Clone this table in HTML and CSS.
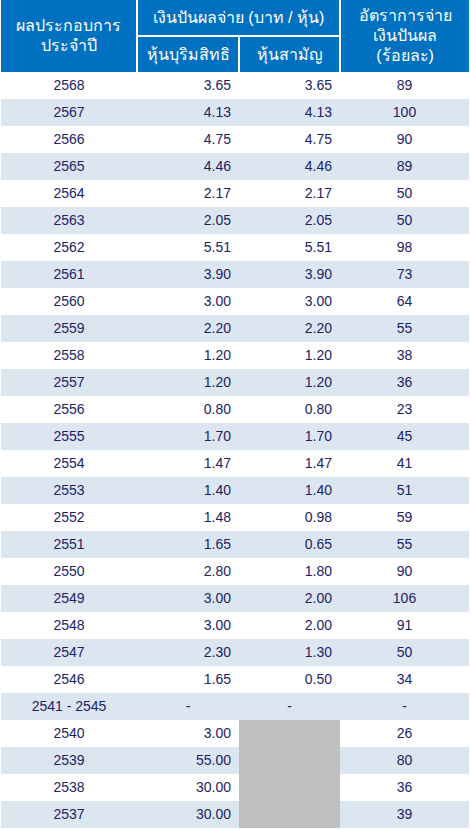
FILE: index.html
```html
<!DOCTYPE html>
<html lang="th">
<head>
<meta charset="utf-8">
<link rel="stylesheet" href="styles.css">
</head>
<body>
<div class="wrap">
<table class="div-table">
  <colgroup>
    <col class="c1"><col class="c2"><col class="c3"><col class="c4">
  </colgroup>
  <thead>
    <tr class="h1">
      <th rowspan="2">ผลประกอบการ<br>ประจำปี</th>
      <th colspan="2">เงินปันผลจ่าย (บาท / หุ้น)</th>
      <th rowspan="2">อัตราการจ่าย<br>เงินปันผล<br>(ร้อยละ)</th>
    </tr>
    <tr class="h2">
      <th>หุ้นบุริมสิทธิ</th>
      <th>หุ้นสามัญ</th>
    </tr>
  </thead>
  <tbody>
    <tr><td class="yr">2568</td><td class="num">3.65</td><td class="num">3.65</td><td class="pct">89</td></tr>
    <tr><td class="yr">2567</td><td class="num">4.13</td><td class="num">4.13</td><td class="pct">100</td></tr>
    <tr><td class="yr">2566</td><td class="num">4.75</td><td class="num">4.75</td><td class="pct">90</td></tr>
    <tr><td class="yr">2565</td><td class="num">4.46</td><td class="num">4.46</td><td class="pct">89</td></tr>
    <tr><td class="yr">2564</td><td class="num">2.17</td><td class="num">2.17</td><td class="pct">50</td></tr>
    <tr><td class="yr">2563</td><td class="num">2.05</td><td class="num">2.05</td><td class="pct">50</td></tr>
    <tr><td class="yr">2562</td><td class="num">5.51</td><td class="num">5.51</td><td class="pct">98</td></tr>
    <tr><td class="yr">2561</td><td class="num">3.90</td><td class="num">3.90</td><td class="pct">73</td></tr>
    <tr><td class="yr">2560</td><td class="num">3.00</td><td class="num">3.00</td><td class="pct">64</td></tr>
    <tr><td class="yr">2559</td><td class="num">2.20</td><td class="num">2.20</td><td class="pct">55</td></tr>
    <tr><td class="yr">2558</td><td class="num">1.20</td><td class="num">1.20</td><td class="pct">38</td></tr>
    <tr><td class="yr">2557</td><td class="num">1.20</td><td class="num">1.20</td><td class="pct">36</td></tr>
    <tr><td class="yr">2556</td><td class="num">0.80</td><td class="num">0.80</td><td class="pct">23</td></tr>
    <tr><td class="yr">2555</td><td class="num">1.70</td><td class="num">1.70</td><td class="pct">45</td></tr>
    <tr><td class="yr">2554</td><td class="num">1.47</td><td class="num">1.47</td><td class="pct">41</td></tr>
    <tr><td class="yr">2553</td><td class="num">1.40</td><td class="num">1.40</td><td class="pct">51</td></tr>
    <tr><td class="yr">2552</td><td class="num">1.48</td><td class="num">0.98</td><td class="pct">59</td></tr>
    <tr><td class="yr">2551</td><td class="num">1.65</td><td class="num">0.65</td><td class="pct">55</td></tr>
    <tr><td class="yr">2550</td><td class="num">2.80</td><td class="num">1.80</td><td class="pct">90</td></tr>
    <tr><td class="yr">2549</td><td class="num">3.00</td><td class="num">2.00</td><td class="pct">106</td></tr>
    <tr><td class="yr">2548</td><td class="num">3.00</td><td class="num">2.00</td><td class="pct">91</td></tr>
    <tr><td class="yr">2547</td><td class="num">2.30</td><td class="num">1.30</td><td class="pct">50</td></tr>
    <tr><td class="yr">2546</td><td class="num">1.65</td><td class="num">0.50</td><td class="pct">34</td></tr>
    <tr><td class="yr">2541 - 2545</td><td class="dash">-</td><td class="dash">-</td><td class="pct">-</td></tr>
    <tr><td class="yr">2540</td><td class="num">3.00</td><td class="na" rowspan="4"></td><td class="pct">26</td></tr>
    <tr><td class="yr">2539</td><td class="num">55.00</td><td class="pct">80</td></tr>
    <tr><td class="yr">2538</td><td class="num">30.00</td><td class="pct">36</td></tr>
    <tr><td class="yr">2537</td><td class="num">30.00</td><td class="pct">39</td></tr>
  </tbody>
</table>
</div>
</body>
</html>
```

FILE: styles.css
```css
html, body {
  margin: 0;
  padding: 0;
  background: #ffffff;
}

.wrap {
  padding: 0 2px 0 1px;
}

.div-table {
  width: 468px;
  border-collapse: collapse;
  table-layout: fixed;
  font-family: "Liberation Sans", "Noto Sans", sans-serif;
  color: #1c2266;
}

.c1 { width: 136px; }
.c2 { width: 102px; }
.c3 { width: 101px; }
.c4 { width: 129px; }

.div-table th {
  background: #0070c0;
  color: #ffffff;
  font-weight: normal;
  font-size: 16px;
  line-height: 20px;
  text-align: center;
  vertical-align: middle;
  border: 2px solid #ffffff;
  border-top: 0;
  padding: 0;
}

.div-table tr.h1 th:first-child { border-left: 0; }
.div-table tr.h1 th:last-child { border-right: 0; }

.div-table tr.h1 { height: 36px; }
.div-table tr.h2 { height: 36px; }
.div-table thead tr.h2 th { border-bottom: 0; }
.div-table tr.h1 th[rowspan] { border-bottom: 0; }

.div-table td {
  height: 27px;
  padding: 0;
  font-size: 14px;
  line-height: 27px;
  vertical-align: middle;
}

.div-table tbody tr:nth-child(even) td {
  background: #dce6f1;
}

.yr { text-align: center; }
.pct { text-align: center; }
.num { text-align: right; padding-right: 8px !important; }
.dash { text-align: center; }

.div-table tbody td.na {
  background: #bfbfbf;
}
```
